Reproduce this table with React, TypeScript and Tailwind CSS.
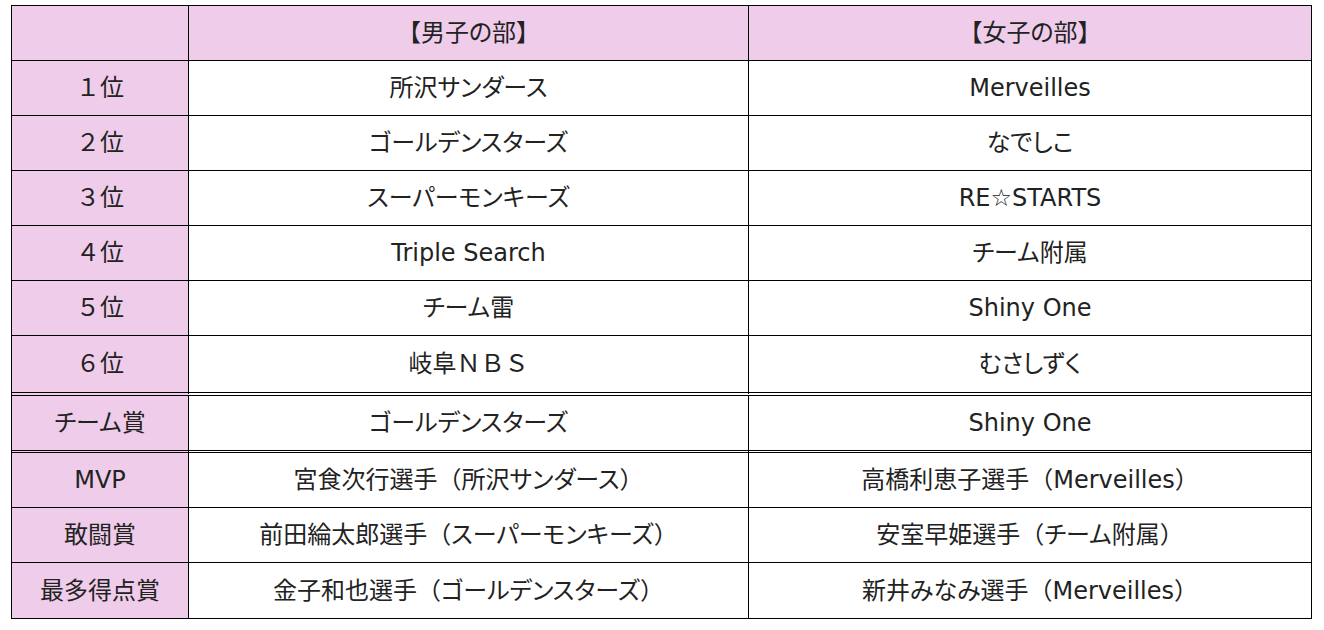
const rows: { label: string; men: string; women: string; border: string; h: string }[] = [
  { label: "１位", men: "所沢サンダース", women: "Merveilles", border: "border-b", h: "h-[55px]" },
  { label: "２位", men: "ゴールデンスターズ", women: "なでしこ", border: "border-b", h: "h-[55px]" },
  { label: "３位", men: "スーパーモンキーズ", women: "RE☆STARTS", border: "border-b", h: "h-[55px]" },
  { label: "４位", men: "Triple Search", women: "チーム附属", border: "border-b", h: "h-[55px]" },
  { label: "５位", men: "チーム雷", women: "Shiny One", border: "border-b", h: "h-[55px]" },
  { label: "６位", men: "岐阜ＮＢＳ", women: "むさしずく", border: "border-b-4 border-double", h: "h-[60px]" },
  { label: "チーム賞", men: "ゴールデンスターズ", women: "Shiny One", border: "border-b-[3px] border-double", h: "h-[57px]" },
  { label: "MVP", men: "宮食次行選手（所沢サンダース）", women: "高橋利恵子選手（Merveilles）", border: "border-b", h: "h-[55px]" },
  { label: "敢闘賞", men: "前田綸太郎選手（スーパーモンキーズ）", women: "安室早姫選手（チーム附属）", border: "border-b", h: "h-[55px]" },
  { label: "最多得点賞", men: "金子和也選手（ゴールデンスターズ）", women: "新井みなみ選手（Merveilles）", border: "", h: "h-[55px]" },
];

const cell = "flex items-center justify-center border-black";

// kana are set proportional (palt), but brackets and full-width letters keep their full width
function Txt({ s }: { s: string }) {
  const parts = s.split(/([（）【】０-９Ａ-Ｚ]+)/);
  return (
    <span>
      {parts.map((p, i) =>
        i % 2 === 1 ? (
          <span key={i} className="[font-feature-settings:normal]">
            {p}
          </span>
        ) : (
          p
        )
      )}
    </span>
  );
}

export default function App() {
  return (
    <div className="h-[630px] w-[1324px] bg-white pt-[5px] pl-[11px] font-['DejaVu_Sans','Noto_Sans_CJK_JP',sans-serif] text-[24px] text-[#222] [font-feature-settings:'palt']">
      <div className="w-[1301px] border border-black">
        <div className="flex h-[55px]">
          <div className={`${cell} w-[177px] border-r border-b bg-[#efcdea]`} />
          <div className={`${cell} w-[560px] border-r border-b bg-[#efcdea]`}>
            <Txt s="【男子の部】" />
          </div>
          <div className={`${cell} flex-1 border-b bg-[#efcdea]`}>
            <Txt s="【女子の部】" />
          </div>
        </div>
        {rows.map((r) => (
          <div key={r.label} className={`flex ${r.h}`}>
            <div className={`${cell} w-[177px] border-r ${r.border} bg-[#efcdea]`}>
              <Txt s={r.label} />
            </div>
            <div className={`${cell} w-[560px] border-r ${r.border}`}>
              <Txt s={r.men} />
            </div>
            <div className={`${cell} flex-1 ${r.border}`}>
              <Txt s={r.women} />
            </div>
          </div>
        ))}
      </div>
    </div>
  );
}
